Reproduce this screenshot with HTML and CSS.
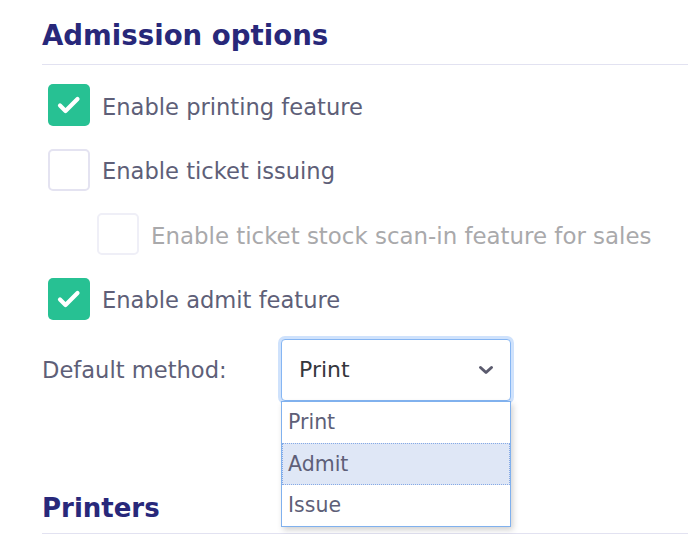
FILE: index.html
```html
<!DOCTYPE html>
<html>
<head>
<meta charset="utf-8">
<link rel="stylesheet" href="styles.css">
</head>
<body>
<div class="page">
  <h2 class="section-title first">Admission options</h2>
  <div class="options">
    <label class="option">
      <span class="box checked"><svg viewBox="0 0 42 42" width="42" height="42"><path d="M12 21.5 L17.5 27 L29.5 15" fill="none" stroke="#fff" stroke-width="4.2" stroke-linecap="round" stroke-linejoin="round"/></svg></span>
      <span class="label">Enable printing feature</span>
    </label>
    <label class="option">
      <span class="box"></span>
      <span class="label">Enable ticket issuing</span>
    </label>
    <label class="option nested disabled">
      <span class="box"></span>
      <span class="label">Enable ticket stock scan-in feature for sales</span>
    </label>
    <label class="option">
      <span class="box checked"><svg viewBox="0 0 42 42" width="42" height="42"><path d="M12 21.5 L17.5 27 L29.5 15" fill="none" stroke="#fff" stroke-width="4.2" stroke-linecap="round" stroke-linejoin="round"/></svg></span>
      <span class="label">Enable admit feature</span>
    </label>
  </div>
  <div class="method">
    <span class="method-label">Default method:</span>
    <div class="select-wrap">
      <div class="select">
        <span class="select-value">Print</span>
        <svg class="chevron" viewBox="0 0 16 10" width="16" height="10"><path d="M2.5 2.5 L8 7.5 L13.5 2.5" fill="none" stroke="#5b5b6e" stroke-width="3" stroke-linecap="round" stroke-linejoin="round"/></svg>
      </div>
      <ul class="dropdown">
        <li class="item">Print</li>
        <li class="item active">Admit</li>
        <li class="item">Issue</li>
      </ul>
    </div>
  </div>
  <h2 class="section-title second">Printers</h2>
</div>
</body>
</html>
```
FILE: styles.css
```css
html, body {
  margin: 0;
  padding: 0;
  background: #ffffff;
}
body {
  font-family: "DejaVu Sans", "Noto Sans", sans-serif;
  color: #5e5f78;
}
.page {
  width: 646px;
  padding-left: 42px;
}
.section-title {
  margin: 0;
  font-size: 27.6px;
  line-height: 36px;
  font-weight: 700;
  color: #28287a;
  border-bottom: 1px solid #e2e2f1;
}
.section-title.first {
  margin-top: 18px;
  padding-bottom: 10px;
}
.section-title.second {
  margin-top: 89px;
  padding-bottom: 7.5px;
  font-size: 26px;
}
.options {
  display: flex;
  flex-direction: column;
  gap: 22.5px;
  margin-top: 19px;
  padding-left: 6px;
}
.option {
  display: flex;
  align-items: center;
  gap: 12px;
  height: 42px;
}
.option.nested {
  padding-left: 49px;
}
.box {
  width: 42px;
  height: 42px;
  box-sizing: border-box;
  border: 2px solid #e4e3f1;
  border-radius: 5px;
  background: #fff;
  flex: none;
  display: block;
}
.box.checked {
  border: none;
  background: #27c193;
}
.box svg {
  display: block;
}
.option.disabled .box {
  border-color: #efeff7;
}
.label {
  font-size: 22.6px;
  line-height: 28px;
  color: #5e5f78;
  position: relative;
  top: 1.5px;
}
.option.disabled .label {
  color: #a9a9ab;
  font-size: 22.9px;
}
.method {
  display: flex;
  align-items: center;
  margin-top: 19px;
}
.method-label {
  font-size: 22.6px;
  line-height: 28px;
  width: 239px;
  color: #5e5f78;
}
.select-wrap {
  position: relative;
}
.select {
  width: 230px;
  height: 62px;
  box-sizing: border-box;
  border: 1px solid #86b6f3;
  border-radius: 4px;
  box-shadow: 0 0 0 3px #cfe2fc;
  display: flex;
  align-items: center;
  justify-content: space-between;
  padding: 0 16px 0 17px;
  background: #fff;
}
.select-value {
  font-size: 22px;
  color: #35363c;
}
.chevron {
  display: block;
}
.dropdown {
  position: absolute;
  left: 0;
  top: 62px;
  width: 230px;
  box-sizing: border-box;
  margin: 0;
  padding: 0;
  list-style: none;
  background: #fff;
  border: 1px solid #80b1ee;
  box-shadow: 2px 3px 6px rgba(0, 0, 0, 0.18);
  z-index: 2;
}
.item {
  height: 41.5px;
  box-sizing: border-box;
  display: flex;
  align-items: center;
  padding-left: 5px;
  font-size: 20.5px;
  color: #5e5f78;
  border: 1px dotted transparent;
}
.item.active {
  background: #dfe7f6;
  border-color: #86aae6;
}
```
